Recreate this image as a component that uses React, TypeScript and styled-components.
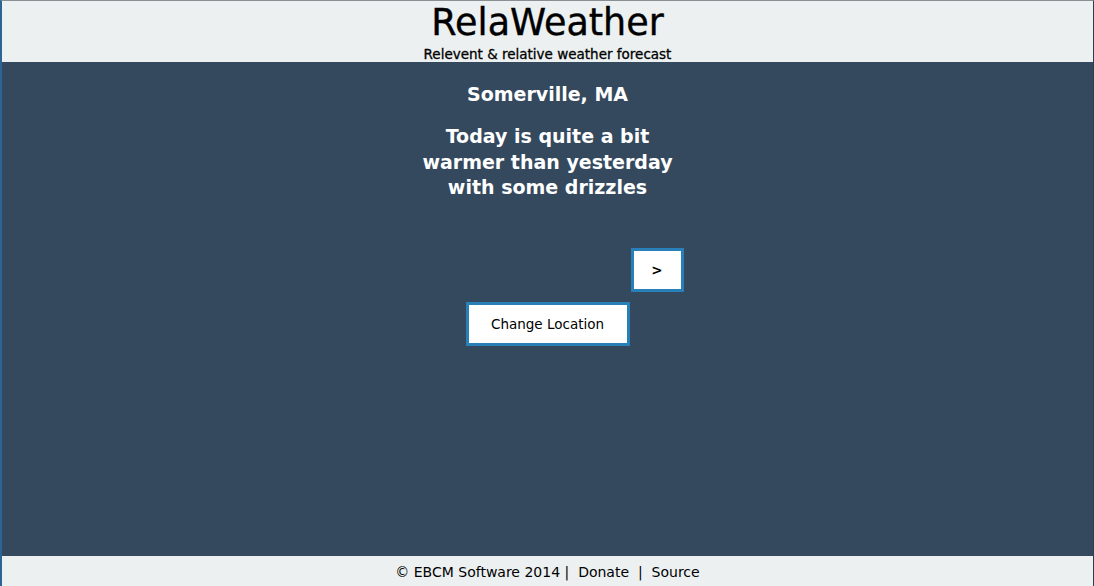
import React from "react";
import styled, { createGlobalStyle } from "styled-components";

const Global = createGlobalStyle`
  html, body { margin: 0; padding: 0; height: 100%; }
  body { font-family: "DejaVu Sans", "Liberation Sans", sans-serif; background: #34495e; }
  #root { height: 100%; }
`;

const Page = styled.div`
  height: 586px;
  display: flex;
  flex-direction: column;
  box-sizing: border-box;
  border-left: 2px solid #2c6496;
  border-right: 1px solid #2c3e50;
  border-top: 1px solid #8a8f94;
`;

const Header = styled.header`
  background: #ecf0f1;
  height: 61px;
  display: flex;
  flex-direction: column;
  align-items: center;
  flex-shrink: 0;
`;

const Title = styled.h1`
  margin: 1px 0 0;
  font-size: 36.5px;
  font-weight: 400;
  line-height: 42px;
  color: #000;
  -webkit-text-stroke: 0.4px #000;
`;

const Subtitle = styled.div`
  margin-top: 2px;
  font-size: 13.5px;
  font-weight: 400;
  line-height: 16px;
  color: #000;
  -webkit-text-stroke: 0.3px #000;
`;

const Main = styled.main`
  flex: 1;
  background: #34495e;
  display: flex;
  flex-direction: column;
  align-items: center;
  color: #fff;
`;

const City = styled.h2`
  margin: 20px 0 0;
  font-size: 19px;
  line-height: 24px;
  font-weight: 700;
`;

const Summary = styled.p`
  margin: 18px 0 0;
  font-size: 19px;
  line-height: 25.5px;
  font-weight: 700;
  text-align: center;
`;

const SummaryLine = styled.span`
  display: block;
`;

const NavRow = styled.div`
  margin-top: 47px;
  display: flex;
  align-items: center;
`;

const Spacer = styled.div`
  width: 166px;
`;

const Button = styled.button<{ $hidden?: boolean }>`
  visibility: ${(p) => (p.$hidden ? "hidden" : "visible")};
  box-sizing: border-box;
  background: #fff;
  border: 3px solid #2980b9;
  color: #000;
  font-family: inherit;
  font-size: 13.5px;
  height: 44px;
  padding: 0;
  cursor: pointer;
`;

const ArrowButton = styled(Button)`
  width: 53px;
  font-weight: 700;
`;

const LocationButton = styled(Button)`
  margin-top: 10px;
  width: 164px;
`;

const Footer = styled.footer`
  background: #ecf0f1;
  height: 30px;
  flex-shrink: 0;
  display: flex;
  justify-content: center;
  align-items: center;
  padding-top: 2px;
  box-sizing: border-box;
  font-size: 14px;
  color: #000;
  white-space: pre;
`;

const FooterLink = styled.a`
  color: #000;
  text-decoration: none;
`;

export default function App() {
  return (
    <>
      <Global />
      <Page>
        <Header>
          <Title>RelaWeather</Title>
          <Subtitle>Relevent &amp; relative weather forecast</Subtitle>
        </Header>
        <Main>
          <City>Somerville, MA</City>
          <Summary>
            <SummaryLine>Today is quite a bit</SummaryLine>
            <SummaryLine>warmer than yesterday</SummaryLine>
            <SummaryLine>with some drizzles</SummaryLine>
          </Summary>
          <NavRow>
            <ArrowButton $hidden>&lt;</ArrowButton>
            <Spacer />
            <ArrowButton>&gt;</ArrowButton>
          </NavRow>
          <LocationButton>Change Location</LocationButton>
        </Main>
        <Footer>
          {"© EBCM Software 2014 |  "}
          <FooterLink href="#">Donate</FooterLink>
          {"  |  "}
          <FooterLink href="#">Source</FooterLink>
        </Footer>
      </Page>
    </>
  );
}
